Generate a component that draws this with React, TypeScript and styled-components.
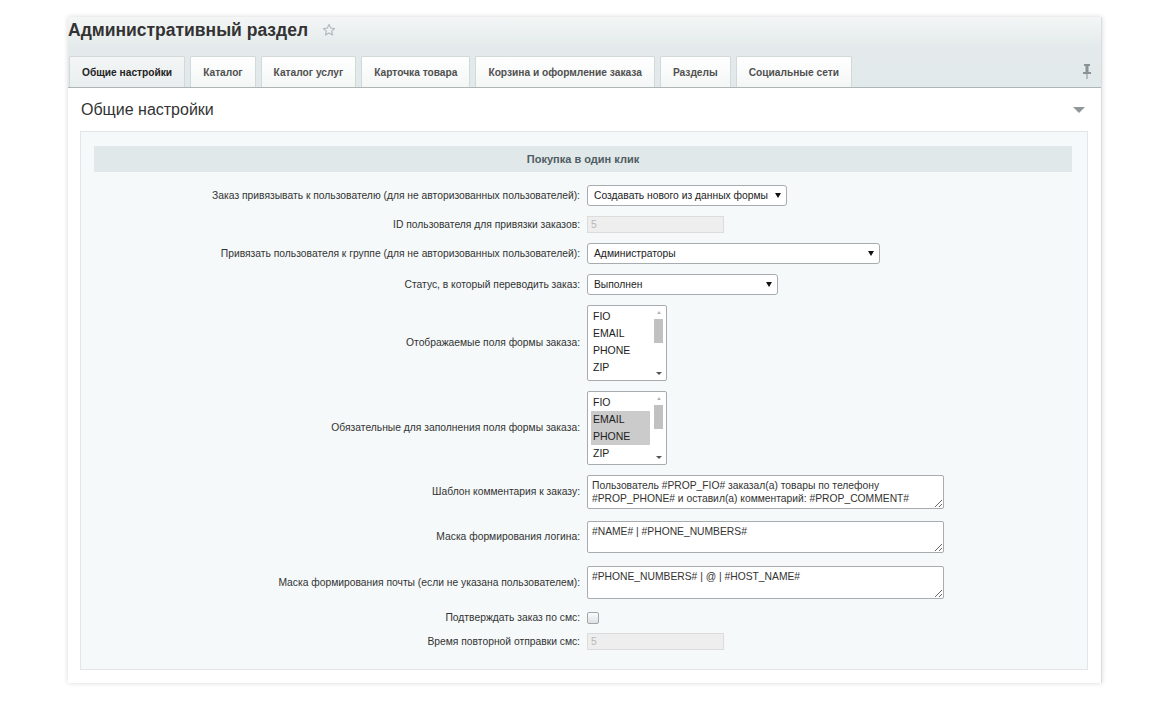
import React from "react";
import styled, { createGlobalStyle } from "styled-components";

const GlobalStyle = createGlobalStyle`
  html, body { margin: 0; padding: 0; background: #fff; }
  body { font-family: "Liberation Sans", Arial, sans-serif; color: #333; }
  * { box-sizing: border-box; }
`;

const Page = styled.div`
  width: 1170px;
  height: 701px;
  padding: 17px 0 0 68px;
`;

const Frame = styled.div`
  width: 1034px;
  box-shadow: 0 0 5px rgba(0, 0, 0, 0.16);
  border-right: 1px solid #d9dfe0;
  background: #fff;
`;

const Header = styled.div`
  background: linear-gradient(to bottom, #f4f6f6 0px, #e4eaeb 30px, #e2e9ea 100%);
  padding-top: 2px;
`;

const TitleRow = styled.div`
  display: flex;
  align-items: center;
  gap: 14px;
  height: 22px;
  margin-bottom: 15px;
`;

const Title = styled.h1`
  margin: 0;
  font-size: 17.5px;
  line-height: 22px;
  font-weight: bold;
  color: #333;
`;

const TabBar = styled.div`
  display: flex;
  align-items: flex-end;
  gap: 5px;
  padding-left: 1px;
  border-bottom: 1px solid #aeb5b7;
`;

const Tab = styled.div<{ $active?: boolean }>`
  height: 31px;
  padding: 0 12px;
  display: flex;
  align-items: center;
  font-size: 10.2px;
  font-weight: bold;
  white-space: nowrap;
  color: ${(p) => (p.$active ? "#222" : "#505050")};
  border: 1px solid #d2d9da;
  border-bottom: none;
  border-radius: 2px 2px 0 0;
  background: ${(p) =>
    p.$active
      ? "linear-gradient(to bottom, #f4f6f6, #e9eded)"
      : "linear-gradient(to bottom, #ffffff, #f4f6f6)"};
`;

const PinWrap = styled.div`
  margin-left: auto;
  align-self: center;
  padding-right: 10px;
  display: flex;
`;

const Content = styled.div`
  background: #fff;
  padding: 0 13px 13px 12px;
`;

const ContentHead = styled.div`
  height: 43px;
  display: flex;
  align-items: center;
  justify-content: space-between;
  padding-left: 1px;
  padding-right: 3px;
`;

const ContentTitle = styled.h2`
  margin: 0;
  font-size: 16px;
  font-weight: normal;
  color: #333;
`;

const Collapse = styled.span`
  width: 0;
  height: 0;
  border-left: 6px solid transparent;
  border-right: 6px solid transparent;
  border-top: 6px solid #8f979a;
`;

const Panel = styled.div`
  background: #f5f9f9;
  border: 1px solid #e1e7e8;
  padding: 14px 15px 19px 13px;
`;

const SectionHead = styled.div`
  height: 26px;
  background: #e0e8e9;
  display: flex;
  align-items: center;
  justify-content: center;
  font-size: 11px;
  font-weight: bold;
  color: #4f5d61;
`;

const FormGrid = styled.div`
  margin-top: 13px;
  display: grid;
  grid-template-columns: 486px 1fr;
  column-gap: 7px;
  row-gap: 10px;
  align-items: center;
`;

const Label = styled.div<{ $top?: number }>`
  text-align: right;
  font-size: 10.3px;
  line-height: 14px;
  color: #333;
  white-space: nowrap;
  margin-top: ${(p) => p.$top ?? 0}px;
`;

const Field = styled.div<{ $top?: number }>`
  display: flex;
  align-items: center;
  margin-top: ${(p) => p.$top ?? 0}px;
`;

const Select = styled.div<{ $w: number }>`
  width: ${(p) => p.$w}px;
  height: 21px;
  border: 1px solid #a7acaf;
  border-radius: 3px;
  background: #fff;
  display: flex;
  align-items: center;
  justify-content: space-between;
  padding: 0 5px 0 6px;
  font-size: 10.3px;
  white-space: nowrap;
  color: #222;
`;

const Caret = styled.span`
  width: 0;
  height: 0;
  border-left: 3px solid transparent;
  border-right: 3px solid transparent;
  border-top: 5px solid #111;
`;

const Disabled = styled.div`
  width: 137px;
  height: 17px;
  background: #eeeeee;
  border: 1px solid #dcdcdc;
  font-size: 10.3px;
  color: #b8b8b8;
  display: flex;
  align-items: center;
  padding-left: 3px;
`;

const ListBox = styled.div<{ $h: number }>`
  width: 80px;
  height: ${(p) => p.$h}px;
  border: 1px solid #a9acae;
  border-radius: 2px;
  background: #fff;
  display: flex;
  gap: 2px;
  padding: 2px 1px 2px 3px;
`;

const ListItems = styled.div`
  flex: 1;
  display: flex;
  flex-direction: column;
`;

const ListItem = styled.div<{ $sel?: boolean }>`
  height: 17px;
  line-height: 17px;
  padding-left: 2px;
  font-size: 10.5px;
  color: #222;
  background: ${(p) => (p.$sel ? "#cbcbcb" : "transparent")};
`;

const ScrollBar = styled.div`
  width: 13px;
  display: flex;
  flex-direction: column;
  align-items: center;
  padding-top: 3px;
`;

const ArrowUp = styled.span`
  width: 0;
  height: 0;
  border-left: 2px solid transparent;
  border-right: 2px solid transparent;
  border-bottom: 3px solid #b5b5b5;
`;

const ArrowDown = styled.span`
  width: 0;
  height: 0;
  margin-bottom: 3px;
  border-left: 3px solid transparent;
  border-right: 3px solid transparent;
  border-top: 3px solid #555;
`;

const Thumb = styled.div`
  width: 9px;
  height: 24px;
  margin-top: 5px;
  background: #c1c1c1;
`;

const Spacer = styled.div`
  flex: 1;
`;

const TextArea = styled.textarea<{ $h: number }>`
  width: 357px;
  height: ${(p) => p.$h}px;
  display: block;
  border: 1px solid #a9acae;
  border-radius: 2px;
  background: #fff;
  font-family: "Liberation Sans", Arial, sans-serif;
  font-size: 10.3px;
  line-height: 13px;
  color: #333;
  padding: 3px 4px;
  margin: 0;
  overflow: hidden;
`;

const CheckBox = styled.span`
  width: 12px;
  height: 12px;
  border: 1px solid #a1a7a9;
  border-radius: 2px;
  background: linear-gradient(to bottom, #fbfbfb, #dde1e2);
`;

const Star = () => (
  <svg width="14" height="14" viewBox="0 0 24 24" aria-hidden="true">
    <path
      d="M12 2.5l2.9 6.2 6.7.7-5 4.6 1.4 6.6L12 17.2l-6 3.4 1.4-6.6-5-4.6 6.7-.7z"
      fill="none"
      stroke="#b3b9bc"
      strokeWidth="2"
      strokeLinejoin="round"
    />
  </svg>
);

const Pin = () => (
  <svg width="8" height="15" viewBox="0 0 8 15" aria-hidden="true">
    <rect x="1" y="0" width="6" height="2" fill="#8a9295" />
    <rect x="2.5" y="2" width="3" height="6" fill="#8a9295" />
    <rect x="0" y="8" width="8" height="2" fill="#8a9295" />
    <rect x="3.5" y="10" width="1" height="5" fill="#8a9295" />
  </svg>
);

const items = ["FIO", "EMAIL", "PHONE", "ZIP"];

const List = ({ h, selected }: { h: number; selected: string[] }) => (
  <ListBox $h={h}>
    <ListItems>
      {items.map((it) => (
        <ListItem key={it} $sel={selected.includes(it)}>
          {it}
        </ListItem>
      ))}
    </ListItems>
    <ScrollBar>
      <ArrowUp />
      <Thumb />
      <Spacer />
      <ArrowDown />
    </ScrollBar>
  </ListBox>
);

const tabs = [
  "Общие настройки",
  "Каталог",
  "Каталог услуг",
  "Карточка товара",
  "Корзина и оформление заказа",
  "Разделы",
  "Социальные сети",
];

export default function App() {
  return (
    <>
      <GlobalStyle />
      <Page>
        <Frame>
          <Header>
            <TitleRow>
              <Title>Административный раздел</Title>
              <Star />
            </TitleRow>
            <TabBar>
              {tabs.map((t, i) => (
                <Tab key={t} $active={i === 0}>
                  {t}
                </Tab>
              ))}
              <PinWrap>
                <Pin />
              </PinWrap>
            </TabBar>
          </Header>
          <Content>
            <ContentHead>
              <ContentTitle>Общие настройки</ContentTitle>
              <Collapse />
            </ContentHead>
            <Panel>
              <SectionHead>Покупка в один клик</SectionHead>
              <FormGrid>
                <Label>Заказ привязывать к пользователю (для не авторизованных пользователей):</Label>
                <Field>
                  <Select $w={200}>
                    Создавать нового из данных формы <Caret />
                  </Select>
                </Field>

                <Label>ID пользователя для привязки заказов:</Label>
                <Field>
                  <Disabled>5</Disabled>
                </Field>

                <Label>Привязать пользователя к группе (для не авторизованных пользователей):</Label>
                <Field>
                  <Select $w={293}>
                    Администраторы <Caret />
                  </Select>
                </Field>

                <Label>Статус, в который переводить заказ:</Label>
                <Field>
                  <Select $w={191}>
                    Выполнен <Caret />
                  </Select>
                </Field>

                <Label>Отображаемые поля формы заказа:</Label>
                <Field>
                  <List h={76} selected={[]} />
                </Field>

                <Label>Обязательные для заполнения поля формы заказа:</Label>
                <Field>
                  <List h={74} selected={["EMAIL", "PHONE"]} />
                </Field>

                <Label>Шаблон комментария к заказу:</Label>
                <Field>
                  <TextArea
                    $h={34}
                    readOnly
                    defaultValue="Пользователь #PROP_FIO# заказал(а) товары по телефону #PROP_PHONE# и оставил(а) комментарий: #PROP_COMMENT#"
                  />
                </Field>

                <Label $top={2}>Маска формирования логина:</Label>
                <Field $top={2}>
                  <TextArea $h={32} readOnly defaultValue="#NAME# | #PHONE_NUMBERS#" />
                </Field>

                <Label $top={3}>Маска формирования почты (если не указана пользователем):</Label>
                <Field $top={3}>
                  <TextArea $h={33} readOnly defaultValue="#PHONE_NUMBERS# | @ | #HOST_NAME#" />
                </Field>

                <Label $top={2}>Подтверждать заказ по смс:</Label>
                <Field $top={2}>
                  <CheckBox />
                </Field>

                <Label $top={-2}>Время повторной отправки смс:</Label>
                <Field $top={-2}>
                  <Disabled>5</Disabled>
                </Field>
              </FormGrid>
            </Panel>
          </Content>
        </Frame>
      </Page>
    </>
  );
}
